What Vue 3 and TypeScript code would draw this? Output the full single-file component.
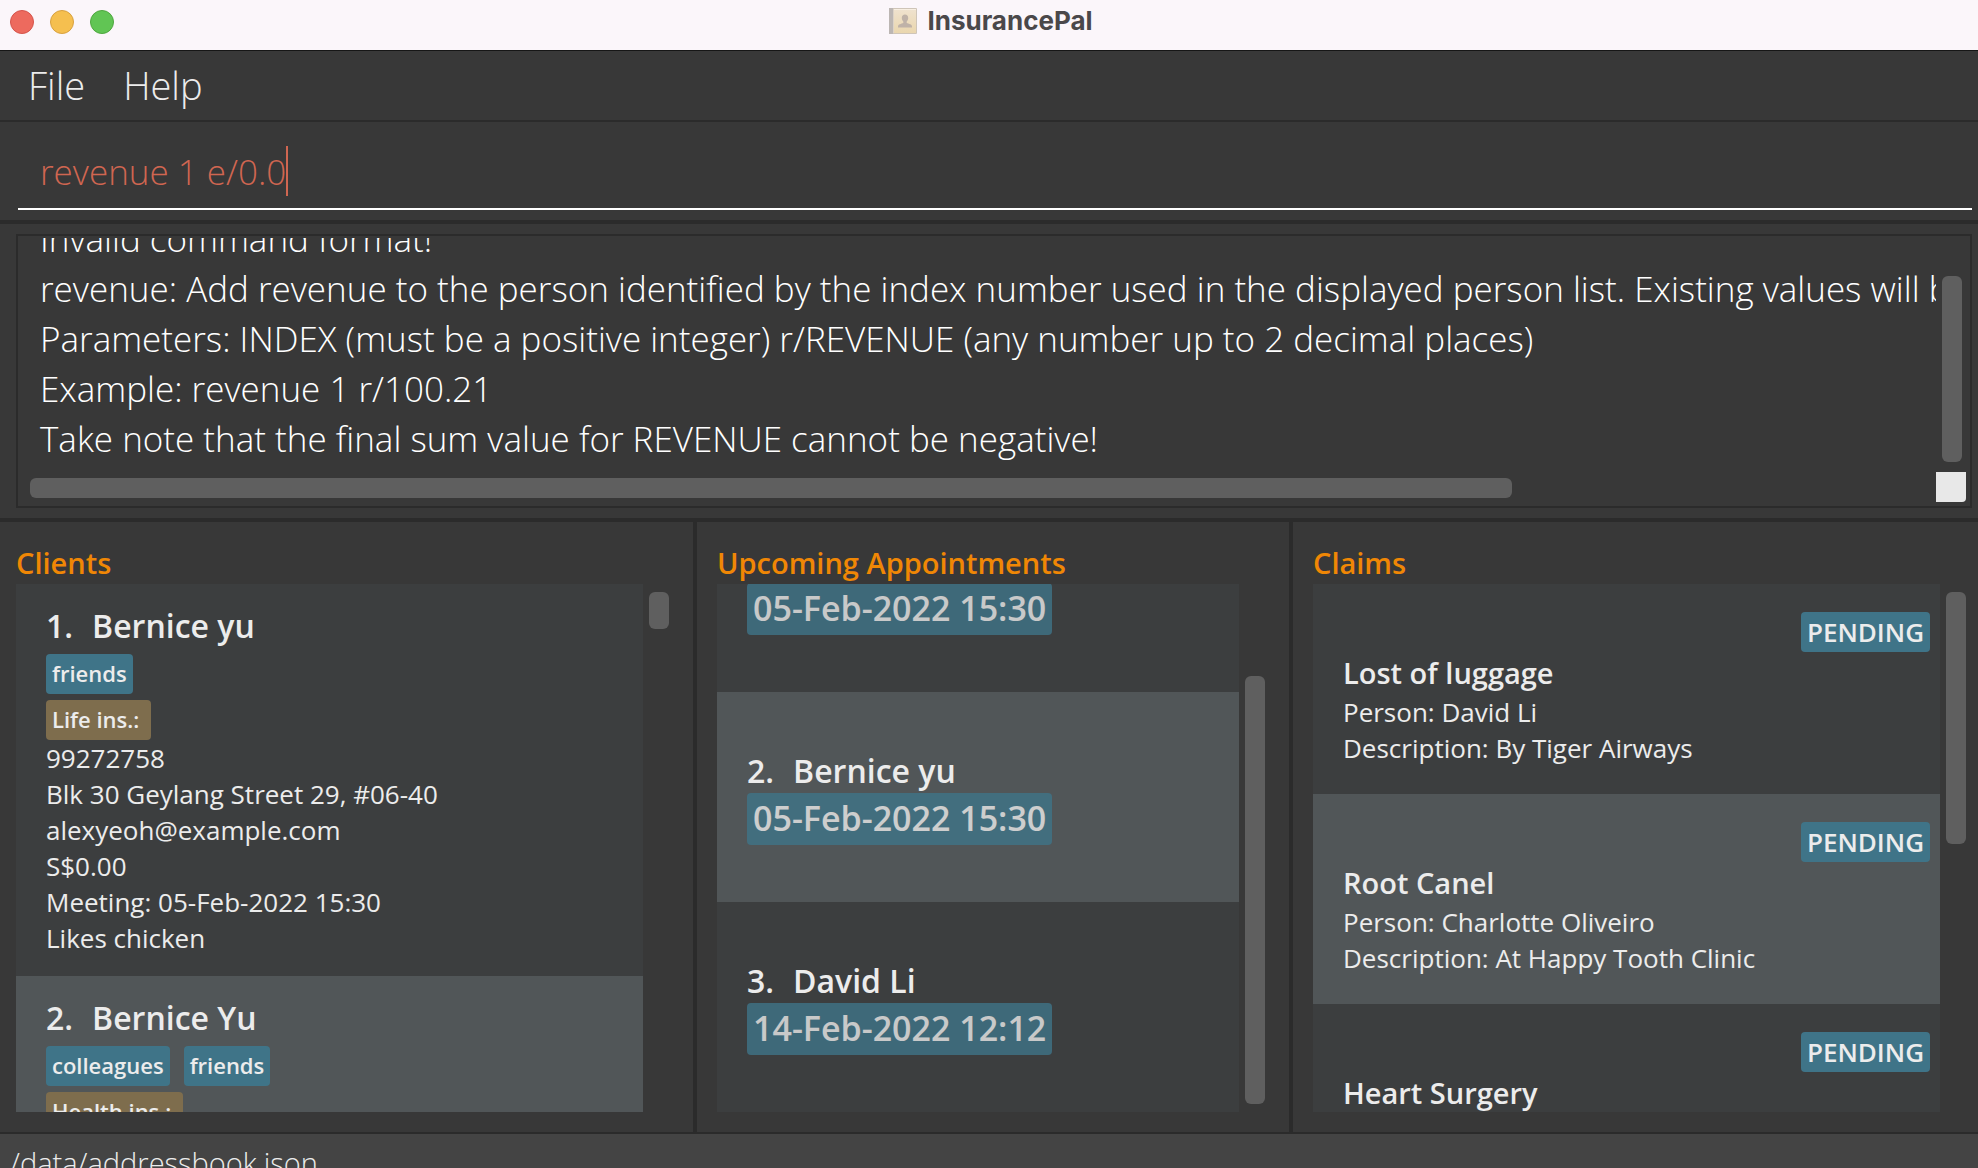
<script setup lang="ts">
import { nextTick, onMounted, ref } from 'vue'

interface Client {
  name: string
  tags: string[]
  insurance: string
  details: string[]
}

interface Appointment {
  name: string
  date: string
}

interface Claim {
  title: string
  status: string
  person: string
  description: string
}

const command = ref('revenue 1 e/0.0')

const result = [
  'Invalid command format!',
  'revenue: Add revenue to the person identified by the index number used in the displayed person list. Existing values will be',
  'Parameters: INDEX (must be a positive integer) r/REVENUE (any number up to 2 decimal places)',
  'Example: revenue 1 r/100.21',
  'Take note that the final sum value for REVENUE cannot be negative!',
].join('\n')

const clients: Client[] = [
  {
    name: 'Bernice yu',
    tags: ['friends'],
    insurance: 'Life ins.: ',
    details: [
      '99272758',
      'Blk 30 Geylang Street 29, #06-40',
      'alexyeoh@example.com',
      'S$0.00',
      'Meeting: 05-Feb-2022 15:30',
      'Likes chicken',
    ],
  },
  {
    name: 'Bernice Yu',
    tags: ['colleagues', 'friends'],
    insurance: 'Health ins.: ',
    details: [],
  },
]

// The list is scrolled to its end, so the first entry shows only its date.
const appointments: Appointment[] = [
  { name: '', date: '05-Feb-2022 15:30' },
  { name: 'Bernice yu', date: '05-Feb-2022 15:30' },
  { name: 'David Li', date: '14-Feb-2022 12:12' },
]

const claims: Claim[] = [
  { title: 'Lost of luggage', status: 'PENDING', person: 'David Li', description: 'By Tiger Airways' },
  { title: 'Root Canel', status: 'PENDING', person: 'Charlotte Oliveiro', description: 'At Happy Tooth Clinic' },
  { title: 'Heart Surgery', status: 'PENDING', person: '', description: '' },
]

const resultBox = ref<HTMLTextAreaElement | null>(null)

onMounted(async () => {
  await nextTick()
  if (resultBox.value) resultBox.value.scrollTop = resultBox.value.scrollHeight
})
</script>

<template>
  <div class="window">
    <header class="titlebar">
      <div class="lights">
        <button class="light close" type="button" aria-label="Close"></button>
        <button class="light minimise" type="button" aria-label="Minimise"></button>
        <button class="light zoom" type="button" aria-label="Zoom"></button>
      </div>
      <div class="title">
        <svg class="book" width="28" height="28" viewBox="0 0 28 28" aria-hidden="true">
          <defs>
            <linearGradient id="cover" x1="0" y1="0" x2="0" y2="1">
              <stop offset="0" stop-color="#efe2cf" />
              <stop offset="1" stop-color="#ead6ae" />
            </linearGradient>
          </defs>
          <rect x="0" y="1" width="28" height="26" rx="1" fill="#cfc5b8" />
          <rect x="5" y="2" width="22" height="24" fill="url(#cover)" />
          <rect x="0" y="1" width="4" height="26" fill="#bcb6b3" />
          <rect x="4" y="2" width="1" height="24" fill="#ddd3c7" />
          <rect x="5" y="2" width="22" height="1" fill="#f8efe2" />
          <path d="M16 7.500c2 0 3.200 1.500 3.200 3.500 0 1.500-.7 2.700-1.500 3.500v1.500c2 .9 5.300 1.200 5.300 3.500v1H9v-1c0-2.300 3.300-2.600 5.300-3.500v-1.500c-.8-.8-1.500-2-1.500-3.500 0-2 1.200-3.500 3.200-3.500z" fill="#bfb2a8" />
        </svg>
        <span>InsurancePal</span>
      </div>
    </header>

    <nav class="menubar">
      <button class="menu" type="button">File</button>
      <button class="menu" type="button">Help</button>
    </nav>

    <section class="command">
      <label class="command-line">
        <input v-model="command" class="command-input" type="text" aria-label="Command" spellcheck="false" />
        <span class="caret"></span>
      </label>
    </section>

    <section class="result">
      <div class="result-frame">
        <div class="result-row">
          <textarea ref="resultBox" class="result-text" readonly wrap="off" aria-label="Result" :value="result"></textarea>
          <div class="track"><div class="thumb result-v"></div></div>
        </div>
        <div class="result-foot">
          <div class="h-track"><div class="h-thumb"></div></div>
          <div class="corner"></div>
        </div>
      </div>
    </section>

    <main class="panels">
      <section class="panel clients">
        <h2 class="heading">Clients</h2>
        <div class="panel-body">
          <ol class="list">
            <li v-for="(c, i) in clients" :key="i" class="cell client">
              <div class="name"><span>{{ i + 1 }}.</span><span>{{ c.name }}</span></div>
              <div class="tags">
                <span v-for="t in c.tags" :key="t" class="tag">{{ t }}</span>
              </div>
              <div class="tags">
                <span class="tag insurance">{{ c.insurance }}</span>
              </div>
              <p v-for="d in c.details" :key="d" class="detail">{{ d }}</p>
            </li>
          </ol>
          <div class="track"><div class="thumb clients-v"></div></div>
        </div>
      </section>

      <section class="panel appointments">
        <h2 class="heading">Upcoming Appointments</h2>
        <div class="panel-body">
          <ol class="list to-end">
            <li v-for="(a, i) in appointments" :key="i" class="cell appointment">
              <div class="name">
                <template v-if="a.name"><span>{{ i + 1 }}.</span><span>{{ a.name }}</span></template>
              </div>
              <span class="tag date">{{ a.date }}</span>
            </li>
          </ol>
          <div class="track bottom"><div class="thumb appointments-v"></div></div>
        </div>
      </section>

      <section class="panel claims">
        <h2 class="heading">Claims</h2>
        <div class="panel-body">
          <ol class="list">
            <li v-for="(c, i) in claims" :key="i" class="cell claim">
              <span class="tag status">{{ c.status }}</span>
              <h3 class="claim-title">{{ c.title }}</h3>
              <template v-if="c.person">
                <p class="detail">Person: {{ c.person }}</p>
                <p class="detail">Description: {{ c.description }}</p>
              </template>
            </li>
          </ol>
          <div class="track"><div class="thumb claims-v"></div></div>
        </div>
      </section>
    </main>

    <footer class="statusbar">/data/addressbook.json</footer>
  </div>
</template>

<style>
body {
  margin: 0;
  background: #383838;
}
</style>

<style scoped>
.window,
.window * {
  box-sizing: border-box;
}

.window {
  display: flex;
  flex-direction: column;
  height: 100vh;
  overflow: hidden;
  background: #383838;
  color: #ececec;
  font-family: 'Open Sans', 'Noto Sans', sans-serif;
}

button,
input,
textarea {
  margin: 0;
  padding: 0;
  border: 0;
  outline: 0;
  background: none;
  color: inherit;
  font: inherit;
}

.titlebar {
  display: grid;
  grid-template-columns: 1fr auto 1fr;
  flex: none;
  height: 51px;
  padding: 0 10px;
  background: #fbf6fa;
  border-bottom: 1px solid #161616;
}

.lights {
  display: flex;
  gap: 16px;
  padding-top: 10px;
}

.light {
  width: 24px;
  height: 24px;
  border: 1px solid;
  border-radius: 50%;
}

.close {
  background: #ed6a5e;
  border-color: #d5544b;
}

.minimise {
  background: #f5bf4f;
  border-color: #d8a140;
}

.zoom {
  background: #61c554;
  border-color: #4fa73f;
}

.title {
  display: flex;
  align-items: center;
  gap: 10px;
  height: 42px;
  padding-left: 4px;
  color: #4a484a;
  font: 700 26px/32px Inter, 'Liberation Sans', sans-serif;
}

.book {
  display: block;
}

.menubar {
  display: flex;
  flex: none;
  align-items: flex-start;
  gap: 38px;
  height: 71px;
  padding: 0 28px;
  border-bottom: 2px solid #2b2b2b;
}

.menu {
  font-size: 38px;
  font-weight: 300;
  line-height: 68px;
}

.command {
  flex: none;
  height: 102px;
  padding: 22px 6px 10px 18px;
  border-bottom: 4px solid #2b2b2b;
}

.command-line {
  display: flex;
  height: 66px;
  padding-left: 22px;
  border-bottom: 2px solid #fff;
}

.command-input {
  field-sizing: content;
  height: 54px;
  color: #d06651;
  font-size: 35px;
  font-weight: 300;
}

.caret {
  width: 2px;
  height: 50px;
  margin-top: 2px;
  background: #d06651;
}

.result {
  flex: none;
  padding: 10px 6px 10px 16px;
  border-bottom: 4px solid #2b2b2b;
}

.result-frame {
  padding: 2px 4px 4px;
  border: 2px solid #2b2b2b;
}

.result-row {
  display: flex;
  height: 234px;
}

.result-text {
  display: block;
  flex: 1;
  min-width: 0;
  padding: 4px 0 8px 18px;
  overflow: hidden;
  resize: none;
  white-space: pre;
  color: #fff;
  font-size: 35px;
  font-weight: 300;
  line-height: 50px;
}

.track {
  display: flex;
  flex: none;
  flex-direction: column;
  width: 30px;
  padding: 8px 4px 8px 6px;
}

.track.bottom {
  justify-content: flex-end;
}

.thumb {
  width: 20px;
  background: #5f5f5f;
  border-radius: 6px;
}

.result-v {
  height: 186px;
  margin-top: auto;
}

.result-row .track {
  padding-bottom: 10px;
}

.clients-v {
  height: 37px;
}

.appointments-v {
  height: 428px;
}

.claims-v {
  height: 252px;
}

.result-foot {
  display: flex;
  height: 30px;
}

.h-track {
  flex: 1;
  padding: 6px 6px 4px 8px;
}

.h-thumb {
  width: 78%;
  height: 20px;
  background: #5f5f5f;
  border-radius: 6px;
}

.corner {
  width: 30px;
  height: 30px;
  background: #e8e8e8;
  border-bottom-right-radius: 4px;
}

.panels {
  display: grid;
  flex: 1;
  grid-template-rows: minmax(0, 1fr);
  grid-template-columns: minmax(0, 697fr) minmax(0, 596fr) minmax(0, 685fr);
  min-height: 0;
}

.panel {
  display: flex;
  flex-direction: column;
  min-width: 0;
  padding: 20px;
}

.clients {
  padding-left: 16px;
  border-right: 4px solid #2b2b2b;
}

.appointments {
  border-right: 4px solid #2b2b2b;
}

.claims {
  padding-right: 8px;
}

.heading {
  margin: 0;
  color: #f08705;
  font-size: 29px;
  font-weight: 600;
  line-height: 42px;
}

.panel-body {
  display: flex;
  flex: 1;
  min-height: 0;
}

.list {
  display: flex;
  flex: 1;
  flex-direction: column;
  min-width: 0;
  margin: 0;
  padding: 0;
  overflow: hidden;
  list-style: none;
  background: #3c3e3f;
}

.to-end {
  justify-content: flex-end;
}

.cell {
  flex: none;
  padding: 20px 10px 20px 30px;
  background: #3c3e3f;
}

.cell:nth-child(even) {
  background: #515658;
}

.name {
  display: flex;
  gap: 19px;
  min-height: 44px;
  font-size: 32px;
  font-weight: 600;
  line-height: 44px;
}

.tags {
  display: flex;
  gap: 14px;
  margin-top: 6px;
}

.tag {
  height: 40px;
  padding: 0 6px;
  border-radius: 4px;
  background: #3f7488;
  font-size: 22px;
  font-weight: 600;
  line-height: 38px;
  white-space: pre;
}

.insurance {
  background: #7e6d4d;
}

.detail {
  margin: 0;
  font-size: 26px;
  line-height: 36px;
}

.appointment {
  display: flex;
  flex-direction: column;
  align-items: flex-start;
  justify-content: center;
  height: 210px;
}

.date {
  height: 52px;
  font-size: 34px;
  line-height: 50px;
  opacity: 0.8;
}

.claim {
  display: flex;
  flex-direction: column;
  min-height: 210px;
  padding-top: 28px;
}

.status {
  align-self: flex-end;
  font-size: 26px;
  line-height: 40px;
}

.claim-title {
  margin: 0;
  font-size: 29px;
  font-weight: 600;
  line-height: 42px;
}

.statusbar {
  flex: none;
  height: 36px;
  padding: 8px 10px 0;
  overflow: hidden;
  background: #444;
  border-top: 2px solid #2b2b2b;
  font-size: 29px;
  font-weight: 300;
  line-height: 42px;
}
</style>
